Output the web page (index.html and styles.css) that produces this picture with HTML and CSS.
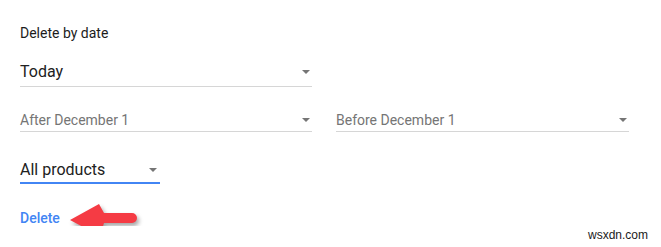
FILE: index.html
```html
<!DOCTYPE html>
<html lang="en">
<head>
    <meta charset="UTF-8">
    <meta name="viewport" content="width=device-width, initial-scale=1.0">
    <title>Delete by date</title>
    <link rel="stylesheet" href="styles.css">
</head>
<body>
    <div class="panel">
        <h2 class="title">Delete by date</h2>

        <div class="select select-wide">
            <span>Today</span>
            <i class="caret"></i>
        </div>

        <div class="range">
            <div class="select select-muted">
                <span>After December 1</span>
                <i class="caret"></i>
            </div>
            <div class="select select-muted select-right">
                <span>Before December 1</span>
                <i class="caret"></i>
            </div>
        </div>

        <div class="select select-products">
            <span>All products</span>
            <i class="caret"></i>
        </div>

        <div class="actions">
            <button class="delete-btn">Delete</button>
            <!-- annotation arrow pointing at the button -->
            <svg class="pointer" width="80" height="42" viewBox="0 0 80 42">
                <path d="M4 20 L33 4 L38 13 L66 13 A5 5 0 0 1 66 23 L38 23 L34 36 Z" fill="#f53b44"/>
            </svg>
        </div>
    </div>

    <div class="watermark">wsxdn.com</div>
</body>
</html>
```

FILE: styles.css
```css
body { margin: 0; padding: 25px 20px 0; font-family: Roboto, "Noto Sans", Arial, sans-serif; background: #fff; color: #212121; }
.panel { position: relative; }
.title { margin: 0; font-size: 14px; line-height: 16px; font-weight: 400; color: #1c1c1c; }

.select { display: flex; align-items: center; justify-content: space-between; box-sizing: border-box; border-bottom: 1px solid #d6d6d6; font-size: 16px; line-height: 20px; }
.select-wide { width: 292px; margin-top: 21px; padding: 0 2px 4px 0; }
.select-muted { width: 292px; font-size: 14px; line-height: 18px; padding: 0 2px 2px 0; color: #757575; }
.select-right { width: 293px; }
.select-products { width: 140px; margin-top: 28px; padding: 0 3px 2px 0; border-bottom: 2px solid #4285f4; }

.caret { width: 0; height: 0; border-left: 4px solid transparent; border-right: 4px solid transparent; border-top: 4px solid #757575; }

.range { display: flex; gap: 24px; margin-top: 24px; }

.actions { position: relative; margin-top: 24px; height: 18px; }
.delete-btn { padding: 0; border: none; background: none; font-family: inherit; font-size: 14px; line-height: 18px; font-weight: 500; color: #4285f4; cursor: pointer; }
.pointer { position: absolute; left: 46px; top: -8px; filter: drop-shadow(2px 3px 2px rgba(0, 0, 0, 0.35)); }

.watermark { position: absolute; right: 13px; top: 228px; font-family: "Liberation Sans", Arial, sans-serif; font-size: 12px; line-height: 14px; color: #1a1a1a; }
```
